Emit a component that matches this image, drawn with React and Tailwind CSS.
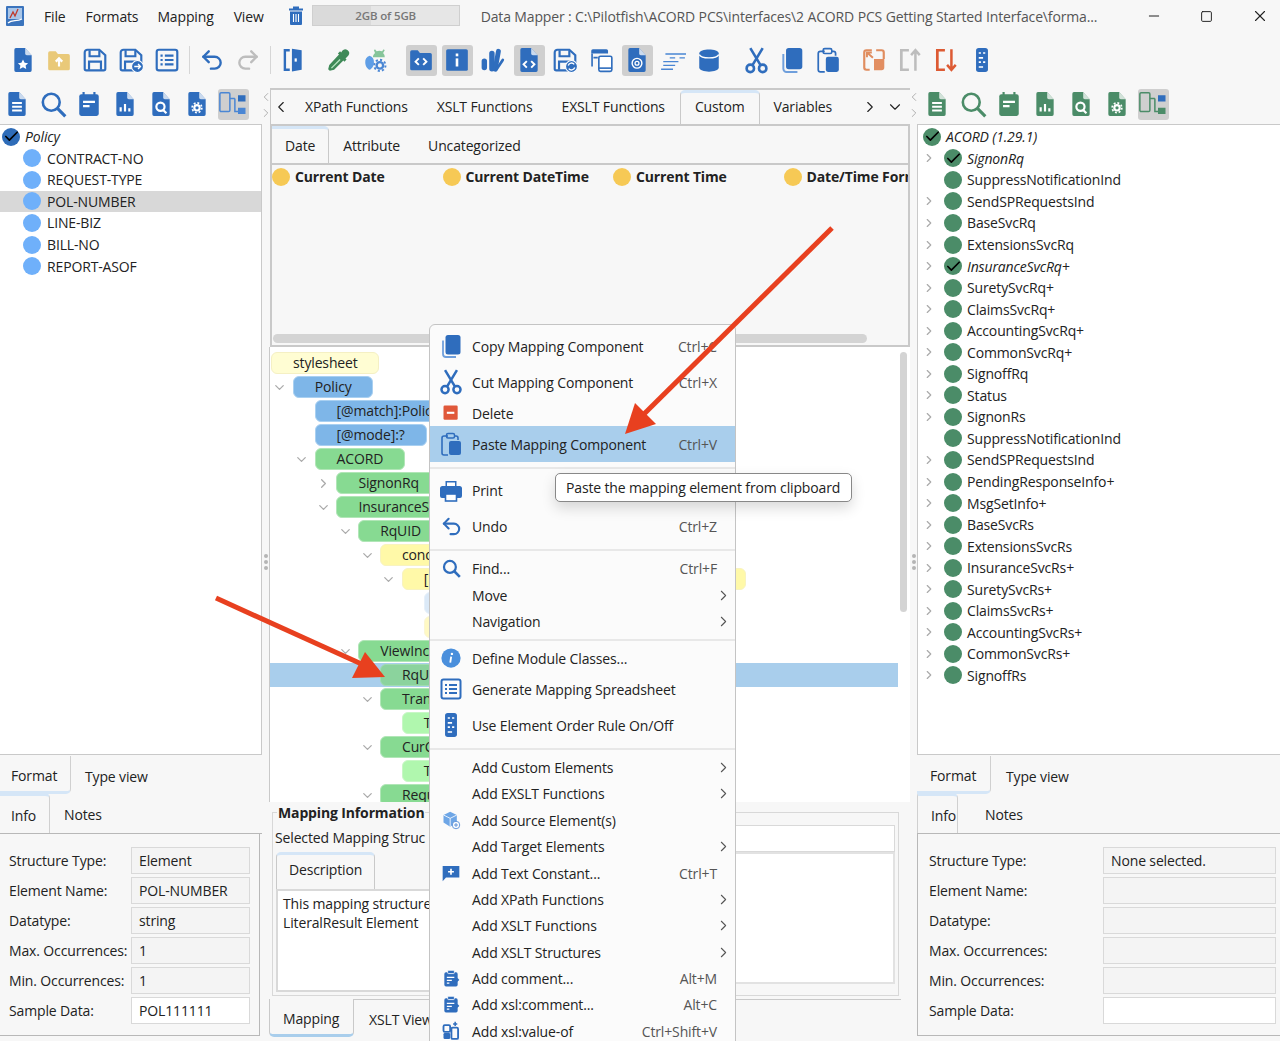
import { ChevronDown, ChevronLeft, ChevronRight, Check, Undo2, Redo2, Minus, Square, X } from "lucide-react";

const BLUE = "#2f6dbd";
const GREEN = "#4b8c68";

// Base drawings used by the toolbars and the context menu
const Svg = ({ size = 26, children }) => (
  <svg width={size} height={size} viewBox="0 0 24 24" className="shrink-0">{children}</svg>
);

const Doc = ({ color = BLUE, size, children }) => (
  <Svg size={size}>
    <path d="M5.5 1h8.5l6 6.5V21.5a1.5 1.5 0 0 1-1.5 1.5h-13A1.5 1.5 0 0 1 4 21.5v-19A1.5 1.5 0 0 1 5.5 1z" fill={color} />
    <path d="M14 1v5a1.500 1.500 0 0 0 1.500 1.500H20z" fill="#fff" opacity=".75" />
    {children}
  </Svg>
);

const DocStar = () => <Doc><path d="M12 11.500l1.500 3 3.200.4-2.300 2.200.6 3.200-3-1.600-3 1.600.6-3.200-2.300-2.200 3.200-.4z" fill="#fff" /></Doc>;
const DocCode = () => <Doc><path d="M10 13l-3 3 3 3M14 13l3 3-3 3" fill="none" stroke="#fff" strokeWidth="1.800" /></Doc>;
const DocAt = () => <Doc><circle cx="12" cy="15" r="4.500" fill="none" stroke="#fff" strokeWidth="1.300" /><circle cx="12" cy="15" r="1.800" fill="none" stroke="#fff" strokeWidth="1.200" /></Doc>;
const DocLines = ({ color }) => <Doc color={color}><path d="M7.500 11h9M7.500 14.500h9M7.500 18h9" stroke="#fff" strokeWidth="1.800" /></Doc>;
const DocChart = ({ color }) => <Doc color={color}><path d="M8 19v-4M12 19v-7M16 19v-3" stroke="#fff" strokeWidth="2" /></Doc>;
const DocSearch = ({ color }) => <Doc color={color}><circle cx="11.500" cy="14.500" r="3.800" fill="none" stroke="#fff" strokeWidth="2" /><path d="M14 17.500l3 3" stroke="#fff" strokeWidth="2" /></Doc>;
const DocGear = ({ color }) => <Doc color={color}><circle cx="12" cy="15.500" r="2.500" fill="none" stroke="#fff" strokeWidth="2" /><circle cx="12" cy="15.500" r="4.500" fill="none" stroke="#fff" strokeWidth="1.500" strokeDasharray="1.800 1.700" /></Doc>;

const Note = ({ color }) => (
  <Svg>
    <path d="M7 1v3M17 1v3" stroke={color} strokeWidth="2" />
    <rect x="3" y="3" width="18" height="20" rx="2" fill={color} />
    <path d="M6.500 10h11M6.500 14h6" stroke="#fff" strokeWidth="2" />
  </Svg>
);

const SearchGlass = ({ color, size = 27, width = 2.300 }) => (
  <Svg size={size}>
    <circle cx="10" cy="10" r="7.500" fill="none" stroke={color} strokeWidth={width} />
    <path d="M15.500 15.500l7 7" stroke={color} strokeWidth={width + 0.500} />
  </Svg>
);

const ScissorsUp = ({ size = 27 }) => (
  <Svg size={size}>
    <circle cx="6.500" cy="19" r="3.300" fill="none" stroke={BLUE} strokeWidth="2.300" />
    <circle cx="17.500" cy="19" r="3.300" fill="none" stroke={BLUE} strokeWidth="2.300" />
    <path d="M8.300 16.300L17.500 1M15.700 16.300L6.500 1" fill="none" stroke={BLUE} strokeWidth="2.300" />
  </Svg>
);

const FolderUp = () => (
  <Svg>
    <path d="M2 5.500A1.500 1.500 0 0 1 3.500 4H9l2 2.500h9.500A1.500 1.500 0 0 1 22 8v12a1.500 1.500 0 0 1-1.500 1.500h-17A1.500 1.500 0 0 1 2 20z" fill="#e9c979" />
    <path d="M12 18v-7M9 13.500l3-3 3 3" fill="none" stroke="#fff" strokeWidth="2" />
  </Svg>
);

const Floppy = ({ children }) => (
  <Svg>
    <path d="M5 2.500h11l5.500 5V20A1.500 1.500 0 0 1 20 21.500H4A1.500 1.500 0 0 1 2.500 20V5A2.500 2.500 0 0 1 5 2.500z" fill="none" stroke={BLUE} strokeWidth="2" />
    <path d="M7 3v5.500h9V3M6.500 21v-7.500h11V21" fill="none" stroke={BLUE} strokeWidth="2" />
    {children}
  </Svg>
);

const SaveAs = () => (
  <Floppy>
    <circle cx="18" cy="18" r="5.500" fill="#2f6dbd" stroke="#fff" />
    <path d="M15 18h5.500M18.500 15.800l2.200 2.200-2.200 2.200" fill="none" stroke="#fff" strokeWidth="1.300" />
  </Floppy>
);

const SaveSync = () => (
  <Floppy>
    <circle cx="18" cy="18" r="5.500" fill="#2f6dbd" stroke="#fff" />
    <path d="M15 17a3.200 3.200 0 0 1 5.500-1M21 19a3.200 3.200 0 0 1-5.500 1" fill="none" stroke="#fff" strokeWidth="1.300" />
  </Floppy>
);

const ListBox = ({ size }) => (
  <Svg size={size}>
    <rect x="2.500" y="2.500" width="19" height="19" rx="2" fill="none" stroke={BLUE} strokeWidth="2" />
    <path d="M6 8h2M6 12h2M6 16h2M10 8h8M10 12h8M10 16h8" stroke={BLUE} strokeWidth="2" />
  </Svg>
);

const Door = () => (
  <Svg>
    <path d="M9 3H4.500v18H9" fill="none" stroke={BLUE} strokeWidth="2.200" />
    <path d="M11 1.500l9 1.500v18l-9 1.500z" fill={BLUE} />
    <rect x="13.500" y="10.500" width="2" height="3" fill="#fff" />
  </Svg>
);

const Dropper = () => (
  <Svg>
    <path d="M15 3.500a3.500 3.500 0 0 1 5.500 4.500l-2.500 2.500 1 1-2 2-1-1-8.500 8.500-4 1-1.500-1.500 1-4L12 7l-1-1 2-2 1 1z" fill="#3f8a58" />
    <path d="M5 19.500l8-8" stroke="#b9e8c4" strokeWidth="1.200" />
  </Svg>
);

const BugGear = () => (
  <Svg>
    <path d="M12 2l1.500 2a6 6 0 0 1 5 0L20 2l1 1-1.500 2.500a5 5 0 0 1 1.500 4H10a5 5 0 0 1 2-4L11 3z" fill="#86c59a" />
    <path d="M7 8a6 6 0 0 1 4 6c0 4-2 6-4 7-2-1-4-3-4-7a6 6 0 0 1 4-6z" fill="#5f9ee6" />
    <circle cx="16.500" cy="17" r="3" fill="none" stroke="#4a86d4" strokeWidth="2.200" />
    <circle cx="16.500" cy="17" r="5.200" fill="none" stroke="#4a86d4" strokeWidth="1.800" strokeDasharray="2 2" />
  </Svg>
);

const FolderCode = () => (
  <Svg>
    <path d="M2 4.500A1.500 1.500 0 0 1 3.500 3H9l2 2.500h9.500A1.500 1.500 0 0 1 22 7v13a1.500 1.500 0 0 1-1.500 1.500h-17A1.500 1.500 0 0 1 2 20z" fill={BLUE} />
    <path d="M10 10.500l-3 3 3 3M14 10.500l3 3-3 3" fill="none" stroke="#fff" strokeWidth="1.800" />
  </Svg>
);

const InfoBox = () => (
  <Svg>
    <rect x="2" y="2" width="20" height="20" rx="1.500" fill={BLUE} />
    <rect x="10.800" y="6" width="2.400" height="2.600" fill="#fff" />
    <rect x="10.800" y="10.500" width="2.400" height="7.500" fill="#fff" />
  </Svg>
);

const Bars = () => (
  <Svg>
    <path d="M4 13v6M11 6v14" stroke={BLUE} strokeWidth="5" strokeLinecap="round" />
    <path d="M17 4L14 20.500" stroke={BLUE} strokeWidth="4.500" strokeLinecap="round" />
    <path d="M21 12l-6 9" stroke={BLUE} strokeWidth="2.500" strokeLinecap="round" />
  </Svg>
);

const Copies = () => (
  <Svg>
    <path d="M3 3.500A1.500 1.500 0 0 1 4.500 2H17a1.500 1.500 0 0 1 1.500 1.500V6H3z" fill={BLUE} />
    <path d="M3 6h1.500v12H3zM5 9h4v1.500H5z" fill={BLUE} />
    <rect x="10" y="8.500" width="12" height="14" rx="1.500" fill="#fff" stroke={BLUE} strokeWidth="1.500" />
    <path d="M10 19.500h12" stroke={BLUE} strokeWidth="1.500" />
  </Svg>
);

const TextLines = () => (
  <Svg>
    <path d="M5 6.500h19M9 10h5M18 10h5M3 13.500h14M3 17h11M1 20.500h11" stroke="#4a86d4" strokeWidth="1.300" />
  </Svg>
);

const Database = () => (
  <Svg>
    <path d="M3 6c0-5 18-5 18 0v13c0 5-18 5-18 0z" fill={BLUE} />
    <path d="M3 7c2 4 16 4 18 0" fill="none" stroke="#fff" strokeWidth="1.300" />
  </Svg>
);

const CopyFill = ({ size }) => (
  <Svg size={size}>
    <path d="M4 6.500V20a3 3 0 0 0 3 3h10" fill="none" stroke="#6f9fdc" strokeWidth="1.800" />
    <rect x="6.500" y="1" width="15" height="19.500" rx="2.500" fill={BLUE} />
  </Svg>
);

const Paste = ({ size }) => (
  <Svg size={size}>
    <path d="M9 4H5A2 2 0 0 0 3 6v15a2 2 0 0 0 2 2h4" fill="none" stroke={BLUE} strokeWidth="1.600" />
    <path d="M15 4h2a2 2 0 0 1 2 2v2" fill="none" stroke={BLUE} strokeWidth="1.600" />
    <rect x="7.500" y="1.500" width="8" height="4.500" rx="1.500" fill="none" stroke={BLUE} strokeWidth="1.500" />
    <rect x="10" y="9" width="12" height="14" rx="2" fill={BLUE} />
  </Svg>
);

const Resize = () => (
  <Svg>
    <path d="M10 3H5a2 2 0 0 0-2 2v14a2 2 0 0 0 2 2h3M14 3h5a2 2 0 0 1 2 2v6" fill="none" stroke="#e08d5f" strokeWidth="2" />
    <path d="M12 11h9.500v8a2.500 2.500 0 0 1-2.500 2.500h-7z" fill="#e28e61" />
    <path d="M11 10L5.500 5M5.500 9.500V5H10" fill="none" stroke="#e08d5f" strokeWidth="1.800" />
  </Svg>
);

const BracketArrow = ({ color, down }) => (
  <Svg>
    <path d="M11 3H4v18h7" fill="none" stroke={color} strokeWidth="2.500" />
    {down
      ? <path d="M17 2v19M13 16.500l4 4.500 4-4.500" fill="none" stroke={color} strokeWidth="2.300" />
      : <path d="M17 22V3M13 7.500L17 3l4 4.500" fill="none" stroke={color} strokeWidth="2.300" />}
  </Svg>
);

const Order = ({ size }) => (
  <Svg size={size}>
    <rect x="6.500" y="1" width="11" height="22" rx="2.500" fill={BLUE} />
    <path d="M9 5.500h2M13 5.500h2M9 10h4M9 14h2M13 14h2M9 18.500h4" stroke="#fff" strokeWidth="1.500" />
  </Svg>
);

const TreeIcon = ({ accent }) => (
  <Svg size={30}>
    <rect x="1.500" y="3" width="8" height="15" rx="1" fill="none" stroke={accent} strokeWidth="1.200" />
    <path d="M9.500 7.500h4M13.500 7.500V18h3" fill="none" stroke={accent} strokeWidth="1.200" />
    <rect x="16" y="5" width="6" height="5" fill="#2f6dbd" />
    <rect x="16" y="15" width="6" height="5" fill={accent} />
  </Svg>
);

const Trash = () => (
  <svg width="16" height="20" viewBox="0 0 16 20">
    <path d="M5 1.500h6M1 3.500h14" stroke={BLUE} strokeWidth="2" />
    <path d="M2 5.500h12V18a1 1 0 0 1-1 1H3a1 1 0 0 1-1-1z" fill={BLUE} />
    <path d="M5.500 8v8M8 8v8M10.500 8v8" stroke="#fff" strokeWidth="1.100" />
  </svg>
);

const Logo = () => (
  <svg width="18" height="20" viewBox="0 0 18 20">
    <rect width="18" height="20" rx="1" fill="#3b74bd" />
    <rect x="2" y="2" width="14" height="11" fill="#a9c6e8" />
    <path d="M4 12l3-6 2 4 3-7" fill="none" stroke="#c0392b" strokeWidth="1.300" />
    <path d="M2 17c4-4 8-1 14-4" fill="none" stroke="#fff" strokeWidth="1.300" />
  </svg>
);

const ToolBtn = ({ active, children }) => (
  <div className="w-[36px] h-[32px] flex items-center justify-center shrink-0">
    <div className={`w-[31px] h-[31px] rounded-[3px] flex items-center justify-center ${active ? "bg-[#cfcfcf]" : ""}`}>
      {children}
    </div>
  </div>
);

const Sep = ({ className }) => <div className={`w-px h-[28px] bg-[#d6d6d6] shrink-0 ${className}`} />;

function TitleBar() {
  return (
    <div className="h-[32px] flex items-center shrink-0 relative">
      <div className="ml-[6px] w-[18px]"><Logo /></div>
      <span className="ml-[20px]">File</span>
      <span className="ml-[20px]">Formats</span>
      <span className="ml-[19px]">Mapping</span>
      <span className="ml-[20px]">View</span>
      <div className="ml-[24px] w-[16px]"><Trash /></div>
      <div className="ml-[8px] w-[148px] h-[21px] -mt-[1px] border border-[#cfcfcf] bg-[#e6e6e6] relative">
        <div className="h-full w-[40%] bg-[#dadada]" />
        <div className="absolute inset-0 flex items-center justify-center text-[11.500px] font-semibold text-[#777]">2GB of 5GB</div>
      </div>
      <span className="ml-[21px] text-[#555] whitespace-nowrap w-[640px]">Data Mapper : C:\Pilotfish\ACORD PCS\interfaces\2 ACORD PCS Getting Started Interface\forma...</span>
      <div className="absolute right-0 top-0 h-[32px] flex items-center text-[#222]">
        <div className="w-[53px] flex justify-center"><Minus size={16} strokeWidth={1.500} /></div>
        <div className="w-[53px] flex justify-center"><Square size={13} strokeWidth={1.800} /></div>
        <div className="w-[53px] flex justify-center mr-[-6px]"><X size={18} strokeWidth={1.500} /></div>
      </div>
    </div>
  );
}

function MainToolbar() {
  return (
    <div className="h-[56px] flex items-center pl-[5px] shrink-0">
      <ToolBtn><DocStar /></ToolBtn>
      <ToolBtn><FolderUp /></ToolBtn>
      <ToolBtn><Floppy /></ToolBtn>
      <ToolBtn><SaveAs /></ToolBtn>
      <ToolBtn><ListBox /></ToolBtn>
      <Sep className="mx-[4px]" />
      <ToolBtn><Undo2 size={26} color={BLUE} strokeWidth={2.200} /></ToolBtn>
      <ToolBtn><Redo2 size={26} color="#bdbdbd" strokeWidth={2.200} /></ToolBtn>
      <Sep className="mx-[4px]" />
      <ToolBtn><Door /></ToolBtn>
      <div className="w-[10px] shrink-0" />
      <ToolBtn><Dropper /></ToolBtn>
      <ToolBtn><BugGear /></ToolBtn>
      <div className="w-[10px] shrink-0" />
      <ToolBtn active><FolderCode /></ToolBtn>
      <ToolBtn active><InfoBox /></ToolBtn>
      <ToolBtn><Bars /></ToolBtn>
      <ToolBtn active><DocCode /></ToolBtn>
      <ToolBtn><SaveSync /></ToolBtn>
      <ToolBtn><Copies /></ToolBtn>
      <ToolBtn active><DocAt /></ToolBtn>
      <ToolBtn><TextLines /></ToolBtn>
      <ToolBtn><Database /></ToolBtn>
      <div className="w-[11px] shrink-0" />
      <ToolBtn><ScissorsUp /></ToolBtn>
      <ToolBtn><CopyFill /></ToolBtn>
      <ToolBtn><Paste /></ToolBtn>
      <div className="w-[10px] shrink-0" />
      <ToolBtn><Resize /></ToolBtn>
      <ToolBtn><BracketArrow color="#bdbdbd" /></ToolBtn>
      <ToolBtn><BracketArrow color="#dd5a33" down /></ToolBtn>
      <ToolBtn><Order /></ToolBtn>
    </div>
  );
}

function SideToolbar({ color, accent, className }) {
  return (
    <div className={`h-[36px] flex items-start shrink-0 ${className}`}>
      <ToolBtn><DocLines color={color} /></ToolBtn>
      <ToolBtn><SearchGlass color={color} /></ToolBtn>
      <ToolBtn><Note color={color} /></ToolBtn>
      <ToolBtn><DocChart color={color} /></ToolBtn>
      <ToolBtn><DocSearch color={color} /></ToolBtn>
      <ToolBtn><DocGear color={color} /></ToolBtn>
      <ToolBtn active><TreeIcon accent={accent} /></ToolBtn>
    </div>
  );
}

const Bubble = ({ color, checked }) => (
  <span className="w-[18px] h-[18px] rounded-full flex items-center justify-center shrink-0" style={{ backgroundColor: color }}>
    {checked && <Check size={17} strokeWidth={2.400} color="#000" />}
  </span>
);

const leftItems = ["CONTRACT-NO", "REQUEST-TYPE", "POL-NUMBER", "LINE-BIZ", "BILL-NO", "REPORT-ASOF"];

function SourceTree() {
  return (
    <div className="h-[631px] bg-white border-y border-r border-[#c9c9c9] pt-[1px] overflow-hidden">
      <div className="h-[21.550px] flex items-center pl-[2px] gap-[5px]">
        <Bubble color="#2e6cb8" checked />
        <span className="italic">Policy</span>
      </div>
      {leftItems.map((name) => (
        <div key={name} className={`h-[21.550px] flex items-center pl-[23px] gap-[6px] ${name === "POL-NUMBER" ? "bg-[#d8d8d8]" : ""}`}>
          <Bubble color="#6fb0fa" />
          <span>{name}</span>
        </div>
      ))}
    </div>
  );
}

const rightItems = [
  ["SignonRq", true, true], ["SuppressNotificationInd", false], ["SendSPRequestsInd", true], ["BaseSvcRq", true],
  ["ExtensionsSvcRq", true], ["InsuranceSvcRq+", true, true], ["SuretySvcRq+", true], ["ClaimsSvcRq+", true],
  ["AccountingSvcRq+", true], ["CommonSvcRq+", true], ["SignoffRq", true], ["Status", true], ["SignonRs", true],
  ["SuppressNotificationInd", false], ["SendSPRequestsInd", true], ["PendingResponseInfo+", true], ["MsgSetInfo+", true],
  ["BaseSvcRs", true], ["ExtensionsSvcRs", true], ["InsuranceSvcRs+", true], ["SuretySvcRs+", true],
  ["ClaimsSvcRs+", true], ["AccountingSvcRs+", true], ["CommonSvcRs+", true], ["SignoffRs", true],
];

function TargetTree() {
  return (
    <div className="h-[631px] bg-white border-y border-l border-[#c9c9c9] pt-[1px] overflow-hidden">
      <div className="h-[21.550px] flex items-center pl-[5px] gap-[5px]">
        <Bubble color={GREEN} checked />
        <span className="italic">ACORD (1.29.1)</span>
      </div>
      {rightItems.map(([name, expandable, checked], i) => (
        <div key={i} className="h-[21.550px] flex items-center pl-[4px]">
          <span className="w-[22px] shrink-0">
            {expandable && <ChevronRight size={14} color="#aaa" />}
          </span>
          <Bubble color={GREEN} checked={checked} />
          <span className={`ml-[5px] ${checked ? "italic" : ""}`}>{name}</span>
        </div>
      ))}
    </div>
  );
}

function Field({ label, value, white, labelW, fieldW }) {
  return (
    <div className="h-[30px] flex items-center">
      <span className={`shrink-0 whitespace-nowrap ${labelW}`}>{label}</span>
      <div className={`h-[27px] flex items-center pl-[7px] border border-[#d9d9d9] ${fieldW} ${white ? "bg-white" : "bg-[#f4f4f4]"}`}>{value}</div>
    </div>
  );
}

function BottomTabs({ first, second, third, fourth, firstW, infoW, text2, text4, tabPad }) {
  return (
    <>
      <div className="h-[39px] flex items-center relative shrink-0">
        <div className={`h-[38px] pt-[4px] ${firstW} ${tabPad} flex items-center border-r border-b-[3px] border-[#d0d0d0] border-b-[#d5e6f7] rounded-br-[5px]`}>{first}</div>
        <span className={`mt-[3px] ${text2}`}>{second}</span>
      </div>
      <div className="h-[40px] flex items-end shrink-0 border-b border-[#b8b8b8]">
        <div className={`h-[40px] pt-[1px] ${infoW} ${tabPad} flex items-center border-r border-[#d0d0d0] border-t-[3px] border-t-[#d5e6f7] rounded-tr-[5px]`}>{third}</div>
        <span className={`h-[39px] pt-[2px] flex items-center ${text4}`}>{fourth}</span>
      </div>
    </>
  );
}

const formRows = [
  ["Structure Type:", "Element"], ["Element Name:", "POL-NUMBER"], ["Datatype:", "string"],
  ["Max. Occurrences:", "1"], ["Min. Occurrences:", "1"], ["Sample Data:", "POL111111", true],
];

function LeftColumn() {
  return (
    <div className="w-[262px] flex flex-col shrink-0">
      <SideToolbar color={BLUE} accent="#4a86d4" className="-ml-[1px]" />
      <SourceTree />
      <BottomTabs first="Format" second="Type view" third="Info" fourth="Notes" firstW="w-[71px]" infoW="w-[50px]" text2="ml-[14px]" text4="ml-[14px]" tabPad="pl-[11px]" />
      <div className="h-[202px] border-r border-b border-[#b8b8b8] pl-[9px] pt-[11px] mr-[2px]">
        {formRows.map(([label, value, white]) => (
          <Field key={label} label={label} value={value} white={white} labelW="w-[122px]" fieldW="w-[119px]" />
        ))}
      </div>
    </div>
  );
}

function RightColumn() {
  const labels = ["Structure Type:", "Element Name:", "Datatype:", "Max. Occurrences:", "Min. Occurrences:", "Sample Data:"];
  return (
    <div className="flex-1 flex flex-col min-w-0">
      <SideToolbar color={GREEN} accent={GREEN} className="pl-[2px]" />
      <TargetTree />
      <BottomTabs first="Format" second="Type view" third="Info" fourth="Notes" firstW="w-[74px]" infoW="w-[41px] border-l" text2="ml-[15px]" text4="ml-[27px]" tabPad="pl-[13px]" />
      <div className="h-[202px] border-l border-b border-[#b8b8b8] pl-[11px] pt-[11px]">
        {labels.map((label, i) => (
          <Field key={label} label={label} value={i === 0 ? "None selected." : ""} white={i === 5} labelW="w-[174px]" fieldW="w-[173px]" />
        ))}
      </div>
    </div>
  );
}

const Sash = () => (
  <div className="w-full h-full relative flex flex-col items-center text-[#999]">
    <ChevronLeft size={14} strokeWidth={1.300} className="mt-[2px]" />
    <ChevronRight size={14} strokeWidth={1.300} className="mt-[2px]" />
    <div className="mt-[434px] flex flex-col gap-[2px]">
      <span className="w-[4px] h-[4px] rounded-full bg-[#b5b5b5]" />
      <span className="w-[4px] h-[4px] rounded-full bg-[#b5b5b5]" />
      <span className="w-[4px] h-[4px] rounded-full bg-[#b5b5b5]" />
    </div>
  </div>
);

function FunctionTabs() {
  return (
    <div className="h-[38px] flex items-end border-t-2 border-b-2 border-l border-[#c9c9c9] relative shrink-0 overflow-hidden">
      <div className="w-[33px] h-full flex items-center pl-[1px]"><ChevronLeft size={18} strokeWidth={1.500} /></div>
      <div className="h-full flex items-center ml-[1px] pb-[2px]">XPath Functions</div>
      <div className="h-full flex items-center ml-[29px] pb-[2px]">XSLT Functions</div>
      <div className="h-full flex items-center ml-[29px] pb-[2px]">EXSLT Functions</div>
      <div className="h-full flex items-center ml-[15px] px-[14px] pb-[5px] border-x border-[#c9c9c9] border-t-[3px] border-t-[#d5e6f7] rounded-t-[5px]">Custom</div>
      <div className="h-full flex items-center ml-[14px] pb-[2px]">Variables</div>
      <div className="absolute right-[6px] top-0 h-full flex items-center gap-[7px]">
        <ChevronRight size={18} strokeWidth={1.500} />
        <ChevronDown size={18} strokeWidth={1.500} />
      </div>
    </div>
  );
}

const functions = ["Current Date", "Current DateTime", "Current Time", "Date/Time Format"];

function FunctionPanel() {
  return (
    <div className="h-[221px] flex flex-col border-x-2 border-b-2 border-[#c9c9c9] shrink-0 overflow-hidden">
      <div className="h-[39px] flex items-end border-b-2 border-[#c9c9c9] shrink-0">
        <div className="h-[37px] flex items-center px-[13px] pb-[1px] border-r border-[#c9c9c9] border-t-[3px] border-t-[#d5e6f7] rounded-tr-[5px]">Date</div>
        <div className="h-full flex items-center ml-[14px] pt-[2px]">Attribute</div>
        <div className="h-full flex items-center ml-[28px] pt-[2px]">Uncategorized</div>
      </div>
      <div className="flex-1 flex pt-[1px]">
        {functions.map((f) => (
          <div key={f} className="w-[170.500px] h-[21px] flex items-center gap-[5px] font-bold text-[14px] whitespace-nowrap shrink-0">
            <Bubble color="#f6c955" />
            <span>{f}</span>
          </div>
        ))}
      </div>
      <div className="h-[9px] mb-[2px] ml-[1px] w-[594px] bg-[#d4d4d4] rounded-full shrink-0" />
    </div>
  );
}

const BLUE_NODE = "bg-[#7eb6e8] border-[#a9d0f1]";
const GREEN_NODE = "bg-[#87da92] border-[#b1e6b7]";
const YELLOW_NODE = "bg-[#fff9a8] border-[#f8f3c0]";
const LEAF_NODE = "bg-[#b0f7ae] border-[#c8f7c6]";

// Only what shows left of the menu is written out: the rest of each label lies under it
const treeRows = [
  { level: 0, width: 108, bg: "bg-[#fffdd3] border-[#f5f0c4]", text: "stylesheet" },
  { level: 1, width: 80, bg: BLUE_NODE, text: "Policy", chev: "down" },
  { level: 2, width: 120, bg: BLUE_NODE, text: "[@match]:Polic" },
  { level: 2, width: 112, bg: BLUE_NODE, text: "[@mode]:?" },
  { level: 2, width: 90, bg: GREEN_NODE, text: "ACORD", chev: "down" },
  { level: 3, width: 100, bg: GREEN_NODE, text: "SignonRq", chev: "right" },
  { level: 3, width: 100, bg: GREEN_NODE, text: "InsuranceS", chev: "down" },
  { level: 4, width: 80, bg: GREEN_NODE, text: "RqUID", chev: "down" },
  { level: 5, width: 60, bg: YELLOW_NODE, text: "cond", chev: "down" },
  { level: 6, width: 344, bg: YELLOW_NODE, text: "[", chev: "down" },
  { level: 7, width: 30, bg: "bg-[#dbe9f7] border-[#e6f0fa]", text: "" },
  { level: 7, width: 30, bg: "bg-[#fff9c4] border-[#fbf6d4]", text: "" },
  { level: 4, width: 80, bg: GREEN_NODE, text: "ViewInc", chev: "down" },
  { level: 5, width: 60, bg: "bg-[#8bd39d] border-[#a0dcb0]", text: "RqU", selected: true },
  { level: 5, width: 60, bg: GREEN_NODE, text: "Tran", chev: "down" },
  { level: 6, width: 40, bg: LEAF_NODE, text: "T" },
  { level: 5, width: 60, bg: GREEN_NODE, text: "CurC", chev: "down" },
  { level: 6, width: 40, bg: LEAF_NODE, text: "T" },
  { level: 5, width: 60, bg: GREEN_NODE, text: "Requ", chev: "down" },
];

function MappingTree() {
  return (
    <div className="h-[455px] flex shrink-0">
      <div className="w-[629px] -ml-[1px] bg-white border-l border-[#c9c9c9] pt-[4px] overflow-hidden shrink-0">
        {treeRows.map((row, i) => (
          <div key={i} className={`h-[24px] flex items-center relative ${row.selected ? "bg-[#a9ceec]" : ""}`} style={{ paddingLeft: 1 + row.level * 21.800 }}>
            {row.chev && (
              <span className="w-[26px] -ml-[26px] flex justify-center">
                {row.chev === "down" ? <ChevronDown size={15} color="#aaa" /> : <ChevronRight size={15} color="#aaa" />}
              </span>
            )}
            <div className={`h-[22px] rounded-md border flex items-center pl-[21px] pb-[1px] whitespace-nowrap overflow-hidden shrink-0 ${row.bg}`} style={{ width: row.width }}>
              {row.text}
            </div>
          </div>
        ))}
      </div>
      <div className="flex-1 bg-white pl-[2px] pt-[5px]">
        <div className="w-[7px] h-[260px] bg-[#d4d4d4] rounded-full" />
      </div>
    </div>
  );
}

function MappingInfo() {
  return (
    <div className="h-[195px] pl-[2px] pr-[11px] pt-[10px] shrink-0">
      <div className="h-[184px] border border-[#d8d8d8] relative pt-[12px] px-[3px]">
        <div className="absolute -top-[11px] left-[4px] font-bold bg-[#f7f7f7] px-[1px]">Mapping Information</div>
        <div className="h-[27px] flex items-center">
          <span className="whitespace-nowrap w-[153px] shrink-0 pb-[2px] -ml-[1px] mr-[1px] overflow-hidden">Selected Mapping Struc</span>
          <div className="flex-1 h-[27px] bg-white border border-[#d9d9d9]" />
        </div>
        <div className="flex items-start">
          <div className="w-[153px] shrink-0">
            <div className="h-[37px] w-[99px] flex items-center pl-[12px] pb-[6px] border-x border-[#c9c9c9] border-t-[3px] border-t-[#d5e6f7] rounded-t-[5px]">Description</div>
            <div className="h-[103px] bg-white border-y-2 border-l-2 border-[#d9d9d9] pl-[5px] pt-[3px] leading-[19px] whitespace-nowrap overflow-hidden">
              <div>This mapping structure</div>
              <div>LiteralResult Element</div>
            </div>
          </div>
          <div className="flex-1 h-[132px] bg-white border-2 border-[#e2e2e2]" />
        </div>
      </div>
    </div>
  );
}

function MappingTabs() {
  return (
    <div className="h-[44px] flex items-start shrink-0 -ml-[1px] pt-[2px] mr-[9px]">
      <div className="h-[38px] w-[85px] flex items-center pl-[13px] pt-[3px] border-x border-[#c9c9c9] border-b-[3px] border-b-[#a9ceec] rounded-b-[5px]">Mapping</div>
      <div className="flex-1 h-[38px] flex items-center pl-[15px] pt-[2px] border-t border-[#c9c9c9] whitespace-nowrap">XSLT View</div>
    </div>
  );
}

const Chevron = () => <ChevronRight size={17} strokeWidth={1.500} color="#555" />;

const Minicon = ({ children }) => <Svg size={20}>{children}</Svg>;

const DeleteIcon = () => (
  <Minicon>
    <rect x="3" y="3" width="17" height="17" rx="1.500" fill="#e0583a" />
    <rect x="7" y="10.500" width="9" height="2.500" fill="#fff" />
  </Minicon>
);

const PrintIcon = () => (
  <Svg size={24}>
    <path d="M6.500 7V2h11v5M6.500 19H3a2 2 0 0 1-2-2v-7.500A2.500 2.500 0 0 1 3.500 7h17A2.500 2.500 0 0 1 23 9.500V17a2 2 0 0 1-2 2h-3.500" fill={BLUE} />
    <rect x="6.500" y="15" width="11" height="7" fill="#fff" stroke={BLUE} strokeWidth="1.600" />
    <rect x="8" y="3.500" width="8" height="3.500" fill="#fff" />
  </Svg>
);

const InfoRound = () => (
  <Svg size={22}>
    <circle cx="12" cy="12" r="10.500" fill="#4a8fdc" />
    <path d="M12.200 10.500l-1 6.500" stroke="#fff" strokeWidth="2" />
    <circle cx="13" cy="7.500" r="1.300" fill="#fff" />
  </Svg>
);

const CubeIcon = () => (
  <Minicon>
    <path d="M3 6l8-4 8 4v9l-8 5-8-5z" fill="#6ea6e6" />
    <path d="M3 6l8 4 8-4M11 10v10" fill="none" stroke="#fff" strokeWidth="1" />
    <circle cx="18" cy="18" r="4.500" fill="#fff" stroke="#4a86d4" />
    <path d="M18 15.500v5M15.500 18h5" stroke="#4a86d4" />
  </Minicon>
);

const TextPlus = () => (
  <Minicon>
    <path d="M2 3.500h20v14H6L2 22z" fill={BLUE} />
    <path d="M12 7v7M8.500 10.500h7" stroke="#fff" strokeWidth="2" />
  </Minicon>
);

const CommentIcon = () => (
  <Minicon>
    <path d="M6 4h12a2 2 0 0 1 2 2v13a2 2 0 0 1-2 2H6a2 2 0 0 1-2-2V6a2 2 0 0 1 2-2z" fill={BLUE} />
    <rect x="8" y="1.500" width="8" height="4" rx="1" fill={BLUE} stroke="#fff" />
    <path d="M7 10h9M7 13.500h6M7 17h3" stroke="#fff" strokeWidth="1.500" />
    <path d="M13 19l8-7" stroke="#2f6dbd" strokeWidth="3" />
  </Minicon>
);

const ValueOfIcon = () => (
  <Minicon>
    <rect x="3" y="5" width="8" height="8" rx="1.500" fill="none" stroke={BLUE} strokeWidth="2.200" />
    <rect x="3" y="14.500" width="8" height="7" rx="1.500" fill={BLUE} />
    <rect x="12.500" y="8" width="8" height="13.500" rx="1.500" fill="none" stroke={BLUE} strokeWidth="2.200" />
    <path d="M17 1v5M14.500 3.500h5" stroke={BLUE} strokeWidth="1.800" />
  </Minicon>
);

const menuItems = [
  { h: "h-[36px]", icon: <CopyFill size={24} />, label: "Copy Mapping Component", key: "Ctrl+C" },
  { h: "h-[36px]", icon: <ScissorsUp size={26} />, label: "Cut Mapping Component", key: "Ctrl+X" },
  { h: "h-[26px]", icon: <DeleteIcon />, label: "Delete" },
  { h: "h-[36px]", icon: <Paste size={24} />, label: "Paste Mapping Component", key: "Ctrl+V", active: true },
  { sep: "h-[11px]" },
  { h: "h-[35px]", icon: <PrintIcon />, label: "Print" },
  { h: "h-[36px]", icon: <Undo2 size={23} color={BLUE} strokeWidth={2.200} />, label: "Undo", key: "Ctrl+Z" },
  { sep: "h-[11px]" },
  { h: "h-[27px]", icon: <SearchGlass color={BLUE} size={19} width={2.800} />, label: "Find...", key: "Ctrl+F" },
  { h: "h-[26.400px]", label: "Move", sub: true },
  { h: "h-[26.400px]", label: "Navigation", sub: true },
  { sep: "h-[10px]" },
  { h: "h-[26.500px]", icon: <InfoRound />, label: "Define Module Classes..." },
  { h: "h-[36px]", icon: <ListBox size={24} />, label: "Generate Mapping Spreadsheet" },
  { h: "h-[36px]", icon: <Order size={26} />, label: "Use Element Order Rule On/Off" },
  { sep: "h-[11px]" },
  { h: "h-[26.400px]", label: "Add Custom Elements", sub: true },
  { h: "h-[26.400px]", label: "Add EXSLT Functions", sub: true },
  { h: "h-[26.400px]", icon: <CubeIcon />, label: "Add Source Element(s)" },
  { h: "h-[26.400px]", label: "Add Target Elements", sub: true },
  { h: "h-[26.400px]", icon: <TextPlus />, label: "Add Text Constant...", key: "Ctrl+T" },
  { h: "h-[26.400px]", label: "Add XPath Functions", sub: true },
  { h: "h-[26.400px]", label: "Add XSLT Functions", sub: true },
  { h: "h-[26.400px]", label: "Add XSLT Structures", sub: true },
  { h: "h-[26.400px]", icon: <CommentIcon />, label: "Add comment...", key: "Alt+M" },
  { h: "h-[26.400px]", icon: <CommentIcon />, label: "Add xsl:comment...", key: "Alt+C" },
  { h: "h-[26.400px]", icon: <ValueOfIcon />, label: "Add xsl:value-of", key: "Ctrl+Shift+V" },
];

function ContextMenu() {
  return (
    <div className="absolute left-[429px] top-[324px] w-[307px] h-[730px] bg-[#fbfbfb] border border-[#c4c4c4] rounded-t-md pt-[3px] overflow-hidden z-10">
      {menuItems.map((item, i) =>
        item.sep ? (
          <div key={i} className={`${item.sep} flex items-center`}><div className="w-full h-[2px] bg-[#e8e8e8]" /></div>
        ) : (
          <div key={i} className={`${item.h} flex items-center ${item.active ? "bg-[#a9ceec]" : ""}`}>
            <span className="w-[42px] flex justify-center shrink-0">{item.icon}</span>
            <span className="flex-1 whitespace-nowrap">{item.label}</span>
            {item.key && <span className="text-[#555] whitespace-nowrap mr-[18px]">{item.key}</span>}
            {item.sub && <span className="mr-[3px]"><Chevron /></span>}
          </div>
        )
      )}
    </div>
  );
}

function Annotations() {
  return (
    <svg className="absolute inset-0 z-20 pointer-events-none" width="1280" height="1041">
      <path d="M832 228L642 416" stroke="#e8401f" strokeWidth="5" />
      <path d="M625 434L635 403L656 424z" fill="#e8401f" />
      <path d="M216 598L366 666" stroke="#e8401f" strokeWidth="5" />
      <path d="M385 677L365 652L352 678z" fill="#e8401f" />
    </svg>
  );
}

export default function App() {
  return (
    <div className="w-[1280px] h-[1041px] bg-[#f7f7f7] relative overflow-hidden flex flex-col text-[14px] text-[#222] font-['Open_Sans',sans-serif] tracking-[-0.14px]">
      <TitleBar />
      <MainToolbar />
      <div className="flex flex-1 min-h-0">
        <LeftColumn />
        <div className="w-[8px] shrink-0"><Sash /></div>
        <div className="w-[640px] flex flex-col shrink-0">
          <FunctionTabs />
          <FunctionPanel />
          <MappingTree />
          <MappingInfo />
          <MappingTabs />
        </div>
        <div className="w-[7px] shrink-0"><Sash /></div>
        <RightColumn />
      </div>
      <ContextMenu />
      <div className="absolute left-[555px] top-[473px] w-[297px] h-[29px] bg-white border border-[#888] rounded-[5px] flex items-center pl-[10px] shadow-[0_6px_14px_rgba(0,0,0,0.15)] z-10">
        Paste the mapping element from clipboard
      </div>
      <Annotations />
    </div>
  );
}
